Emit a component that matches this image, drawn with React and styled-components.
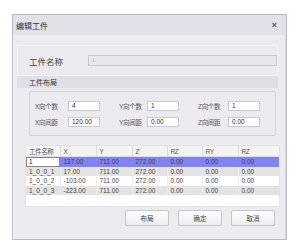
import React from 'react';
import styled, { createGlobalStyle } from 'styled-components';

const GlobalStyle = createGlobalStyle`
  html, body {
    margin: 0;
    padding: 0;
    background: #ffffff;
  }
  body {
    font-family: "Liberation Sans", "Noto Sans CJK SC", sans-serif;
    color: #333;
  }
`;

const Page = styled.div`
  width: 302px;
  height: 248px;
  padding: 14px 0 0 12px;
  box-sizing: border-box;
`;

const Dialog = styled.div`
  width: 275px;
  height: 226px;
  border: 1px solid #b9b9cb;
  box-sizing: border-box;
  display: flex;
  flex-direction: column;
  background: #ebebef;
`;

const TitleBar = styled.div`
  height: 20px;
  flex: none;
  display: flex;
  align-items: center;
  justify-content: space-between;
  padding: 0 9px 0 3px;
  background: #e1e1e7;
  font-size: 8px;
  color: #333;
`;

const Close = styled.span`
  font-size: 9px;
  color: #555;
  font-weight: bold;
`;

const Body = styled.div`
  flex: 1;
  display: flex;
  flex-direction: column;
  padding: 10px 1px 0 3px;
  border-left: 1px solid #f4f4f7;
  border-right: 1px solid #d8d8e0;
  background: #ececf0;
`;

const NameGroup = styled.div`
  height: 31px;
  margin-right: 6px;
  display: flex;
  align-items: center;
  padding: 0 0 0 11px;
  background: #ebebef;
  border: 1px solid #f3f3f6;
  box-sizing: border-box;
`;

const NameLabel = styled.span`
  width: 59px;
  font-size: 8.5px;
  color: #444;
`;

const NameInput = styled.div`
  width: 189px;
  height: 11px;
  box-sizing: border-box;
  border: 1px solid #c9c9d1;
  background: #e7e7eb;
  font-family: "Liberation Serif", serif;
  font-size: 6px;
  color: #aaa;
  padding-left: 3px;
  line-height: 9px;
`;

const LayoutHeader = styled.div`
  height: 12px;
  margin-right: 6px;
  display: flex;
  align-items: center;
  padding-left: 12px;
  background: #dfdfe5;
  font-size: 7px;
  color: #333;
`;

const LayoutBody = styled.div`
  height: 52px;
  margin-right: 6px;
  padding: 3px 2px 0 12px;
  box-sizing: border-box;
`;

const LayoutBox = styled.div`
  height: 45px;
  border: 1px solid #d4d4dc;
  border-radius: 2px;
  box-sizing: border-box;
  display: grid;
  grid-template-columns: 84px 79px auto;
  align-content: center;
  row-gap: 6px;
  padding-left: 5px;
  background: #ebebef;
`;

const Field = styled.div`
  display: flex;
  align-items: center;
`;

const FieldLabel = styled.span`
  width: ${p => p.$w}px;
  font-size: 6.5px;
  color: #555;
  letter-spacing: -0.3px;
`;

const FieldInput = styled.div`
  width: 32px;
  height: 10px;
  box-sizing: border-box;
  border: 1px solid #c9c9d1;
  background: #fff;
  font-size: 6.5px;
  line-height: 8px;
  padding-left: 3px;
  color: #333;
`;

const TableWrap = styled.div`
  margin: 5px 0 0 8px;
  width: 255px;
  height: 62px;
  background: #fff;
  border: 1px solid #e2e2e8;
  box-sizing: border-box;
  overflow: hidden;
`;

const Table = styled.table`
  width: 255px;
  border-collapse: collapse;
  table-layout: fixed;
  font-size: 6.5px;
`;

const Th = styled.th`
  height: 10px;
  padding: 0 0 0 3px;
  text-align: left;
  font-weight: normal;
  color: #555;
  background: #f3f3f3;
  border-right: 1px solid #dcdcdc;
  border-bottom: 1px solid #dcdcdc;
  white-space: nowrap;
  overflow: hidden;
  letter-spacing: -0.4px;
`;

const Tr = styled.tr`
  background: ${p => (p.$selected ? '#8282f0' : p.$alt ? '#e3e3e3' : '#ffffff')};
`;

const Td = styled.td`
  height: 9.5px;
  padding: 0 0 0 3px;
  color: #444;
  white-space: nowrap;
  overflow: hidden;
  line-height: 9px;
  border-right: 1px solid ${p => (p.$selected ? '#8282f0' : '#ececec')};
  ${p => p.$editing && `
    background: #fff;
    outline: 1px solid #888;
    outline-offset: -1px;
    color: #222;
  `}
`;

const Buttons = styled.div`
  display: flex;
  justify-content: flex-end;
  gap: 9px;
  margin: 3px 9px 0 0;
`;

const Button = styled.button`
  width: 44px;
  height: 16px;
  border: 1px solid #c6c6cc;
  border-radius: 2px;
  background: linear-gradient(#fdfdfd, #ececef);
  font-family: "Noto Sans CJK SC", sans-serif;
  font-size: 6.5px;
  color: #444;
  padding: 0;
`;

const columns = ['工件名称', 'X', 'Y', 'Z', 'RZ', 'RY', 'RZ'];
const widths = [34, 36, 36, 35, 35, 36, 43];

const rows = [
  ['1', '137.00', '711.00', '272.00', '0.00', '0.00', '0.00'],
  ['1_0_0_1', '17.00', '711.00', '272.00', '0.00', '0.00', '0.00'],
  ['1_0_0_2', '-103.00', '711.00', '272.00', '0.00', '0.00', '0.00'],
  ['1_0_0_3', '-223.00', '711.00', '272.00', '0.00', '0.00', '0.00'],
];

const labelWidths = [33, 28, 30];

const fields = [
  ['X向个数', '4'],
  ['Y向个数', '1'],
  ['Z向个数', '1'],
  ['X向间距', '120.00'],
  ['Y向间距', '0.00'],
  ['Z向间距', '0.00'],
];

export default function App() {
  return (
    <Page>
      <GlobalStyle />
      <Dialog>
        <TitleBar>
          <span>编辑工件</span>
          <Close>×</Close>
        </TitleBar>
        <Body>
          <NameGroup>
            <NameLabel>工件名称</NameLabel>
            <NameInput>1</NameInput>
          </NameGroup>
          <LayoutHeader>工件布局</LayoutHeader>
          <LayoutBody>
            <LayoutBox>
              {fields.map(([label, value], i) => (
                <Field key={label}>
                  <FieldLabel $w={labelWidths[i % 3]}>{label}</FieldLabel>
                  <FieldInput>{value}</FieldInput>
                </Field>
              ))}
            </LayoutBox>
          </LayoutBody>
          <TableWrap>
            <Table>
              <colgroup>
                {widths.map((w, i) => (
                  <col key={i} style={{ width: w }} />
                ))}
              </colgroup>
              <thead>
                <tr>
                  {columns.map((c, i) => (
                    <Th key={i}>{c}</Th>
                  ))}
                </tr>
              </thead>
              <tbody>
                {rows.map((r, ri) => (
                  <Tr key={ri} $selected={ri === 0} $alt={ri % 2 === 1}>
                    {r.map((v, ci) => (
                      <Td key={ci} $selected={ri === 0} $editing={ri === 0 && ci === 0}>
                        {v}
                      </Td>
                    ))}
                  </Tr>
                ))}
              </tbody>
            </Table>
          </TableWrap>
          <Buttons>
            <Button>布局</Button>
            <Button>确定</Button>
            <Button>取消</Button>
          </Buttons>
        </Body>
      </Dialog>
    </Page>
  );
}
